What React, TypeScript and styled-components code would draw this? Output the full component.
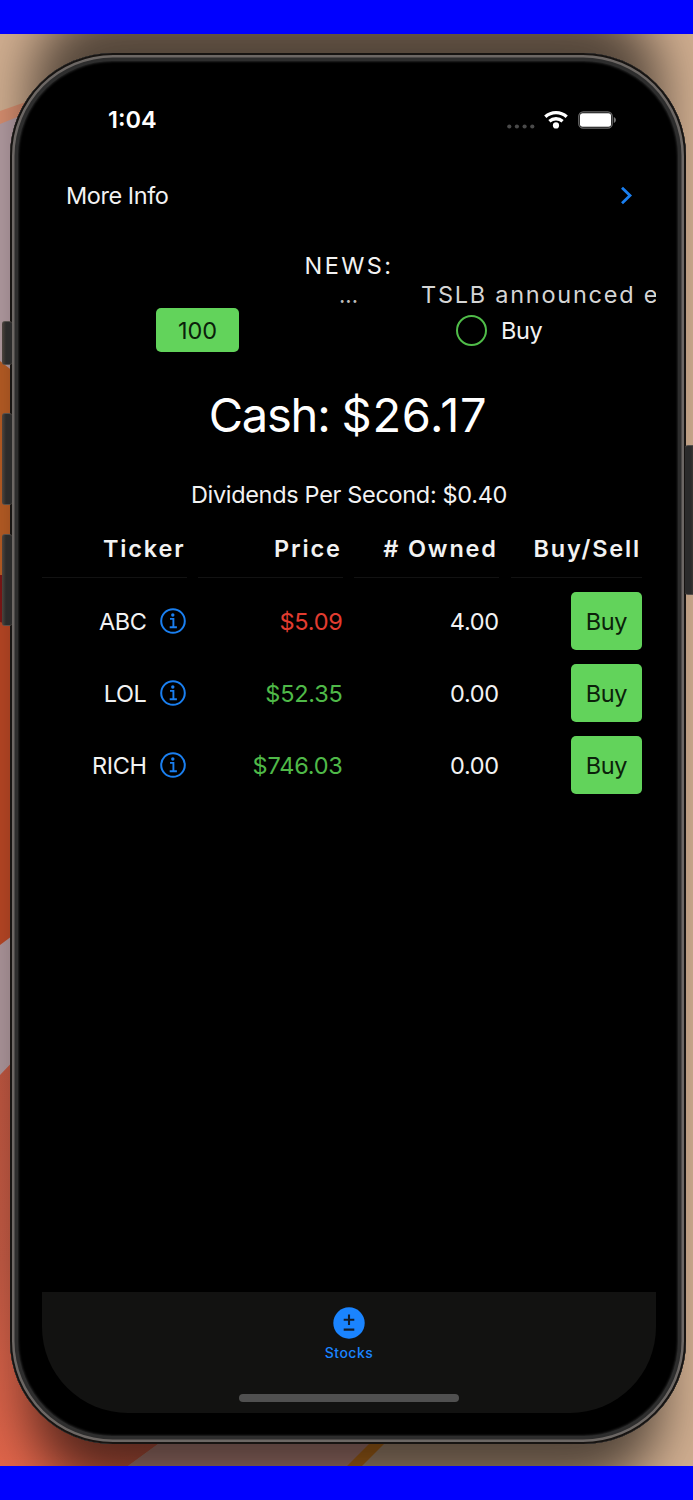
import React from "react";
import styled, { createGlobalStyle } from "styled-components";

const GlobalStyle = createGlobalStyle`
  * { box-sizing: border-box; }
  body {
    margin: 0;
    background: #0000ff;
    font-family: Inter, "Liberation Sans", sans-serif;
    color: #f2f2f2;
  }
`;

const Page = styled.div`
  width: 693px;
  height: 1500px;
  padding: 34px 0;
  background: #0000ff;
  overflow: hidden;
`;

const Desktop = styled.main`
  position: relative;
  height: 1432px;
  padding: 19px 7px 22px 10px;
  overflow: hidden;
`;

const WallpaperSvg = styled.svg`
  position: absolute;
  inset: 0;
`;

const Phone = styled.div`
  position: relative;
  height: 100%;
  padding: 10px 30px 31px 32px;
  border-radius: 103px;
  background: #000;
  box-shadow:
    inset 0 0 0 2px #171412,
    inset 0 0 0 4.5px #6c6764,
    inset 0 0 0 8px #2d2d2d,
    inset 0 0 2px 9px #222;
`;

const SideButton = styled.span<{ $side: "left" | "right"; $top: number; $height: number }>`
  position: absolute;
  ${(p) => p.$side}: ${(p) => (p.$side === "left" ? -8 : -9)}px;
  top: ${(p) => p.$top}px;
  width: 10px;
  height: ${(p) => p.$height}px;
  border-radius: 3px;
  border-top: 1px solid #55504c;
  border-bottom: 1px solid #55504c;
  background: linear-gradient(
    to ${(p) => p.$side},
    #2b2b2b 60%,
    #4d453e
  );
`;

const Screen = styled.div`
  display: flex;
  flex-direction: column;
  height: 100%;
  border-radius: 0 0 86px 86px;
  overflow: hidden;
`;

const StatusBar = styled.header`
  display: flex;
  align-items: center;
  justify-content: space-between;
  height: 113px;
  padding: 0 39px 0 66px;
`;

const StatusIcons = styled.div`
  display: flex;
  align-items: center;
`;

const SignalSlot = styled.div`
  display: flex;
  padding-top: 13px;
`;

const WifiSlot = styled.div`
  display: flex;
  margin: 0 10px 0 9px;
`;

const Text = styled.span<{ $size?: number; $spacing?: number; $weight?: number; $color?: string }>`
  padding-top: 1.5px;
  font-size: ${(p) => p.$size ?? 23.5}px;
  letter-spacing: ${(p) => p.$spacing ?? 0}px;
  font-weight: ${(p) => p.$weight ?? 400};
  color: ${(p) => p.$color ?? "inherit"};
  line-height: 1.2;
  white-space: nowrap;
`;

const MoreInfoRow = styled.div`
  display: flex;
  align-items: center;
  justify-content: space-between;
  height: 38px;
  padding: 0 23px 0 24px;
`;

const News = styled.section`
  display: flex;
  flex-direction: column;
  align-items: center;
  margin-top: 36px;
`;

const NewsTitle = styled.div`
  display: flex;
  align-items: center;
  height: 30px;
`;

const Marquee = styled.div`
  display: flex;
  align-items: center;
  align-self: stretch;
  height: 28px;
  padding-left: 297px;
  gap: 63px;
  overflow: hidden;
`;

const OrderRow = styled.div`
  display: flex;
  align-items: center;
  height: 44px;
  padding-left: 114px;
`;

const Button = styled.button<{ $width: number; $height: number }>`
  display: flex;
  align-items: center;
  justify-content: center;
  width: ${(p) => p.$width}px;
  height: ${(p) => p.$height}px;
  padding: 0;
  border: 0;
  border-radius: 5px;
  background: #62d35b;
  color: #0b210a;
  font-family: inherit;
`;

const Toggle = styled.label`
  display: flex;
  align-items: center;
  gap: 14px;
  margin-left: 217px;
`;

const Radio = styled.span`
  width: 31px;
  height: 31px;
  border: 2px solid #50bd49;
  border-radius: 50%;
`;

const Summary = styled.section<{ $height: number; $gap?: number }>`
  display: flex;
  align-items: center;
  justify-content: center;
  gap: ${(p) => p.$gap ?? 0}px;
  height: ${(p) => p.$height}px;
`;

const CashSummary = styled(Summary)`
  padding: 0 2px 2px 0;
`;

const TableSection = styled.section`
  margin-top: 12px;
`;

const Table = styled.div`
  display: grid;
  grid-template-columns: 144.5px 144.5px 144.5px 131.5px;
  column-gap: 11.7px;
`;

const HeadCell = styled.div`
  display: flex;
  align-items: center;
  justify-content: flex-end;
  height: 56px;
  margin-bottom: 7px;
  padding: 0 1px 2px 0;
  border-bottom: 1.5px solid #121212;
`;

const Cell = styled.div`
  display: flex;
  align-items: center;
  justify-content: flex-end;
  gap: 13px;
  height: 72.2px;
`;

const TickerCell = styled(Cell)`
  padding-right: 1px;
`;

const TabBar = styled.nav`
  display: flex;
  flex-direction: column;
  align-items: center;
  height: 121px;
  margin-top: auto;
  padding: 15px 0 11px;
  background: #121211;
  color: #1a84ff;
`;

const TabItem = styled.div`
  display: flex;
  flex-direction: column;
  align-items: center;
  gap: 4.5px;
`;

const HomeIndicator = styled.span`
  width: 220px;
  height: 8px;
  margin-top: auto;
  border-radius: 4px;
  background: #505050;
`;

function Wallpaper() {
  return (
    <WallpaperSvg width="693" height="1432" viewBox="0 34 693 1432">
      <defs>
        <linearGradient id="coral" gradientUnits="userSpaceOnUse" x1="0" y1="1060" x2="0" y2="1466">
          <stop offset="0" stopColor="#bd5640" />
          <stop offset=".5" stopColor="#c25a44" />
          <stop offset="1" stopColor="#e0654a" />
        </linearGradient>
        <filter id="soft" x="-20%" y="-10%" width="140%" height="120%">
          <feGaussianBlur stdDeviation="26" />
        </filter>
      </defs>
      <rect y="34" width="693" height="1432" fill="#d0ae90" />
      <path d="M0 111 L60 90 V400 H0Z" fill="#d88f70" />
      <path d="M0 124 L60 100 V400 H0Z" fill="#b39ca2" />
      <path d="M0 361 L14 372 V580 H0Z" fill="#b85d25" />
      <path d="M0 575 H20 V640 H0Z" fill="#7c1717" />
      <path d="M0 622 L20 628 V960 H0Z" fill="#b94725" />
      <path d="M0 945 L20 930 V1090 H0Z" fill="#ad969b" />
      <path d="M0 1075 L20 1054 V1300 L180 1428 L128 1466 H0Z" fill="url(#coral)" />
      <path d="M128 1466 L180 1428 H390 L347 1466Z" fill="#d0978c" />
      <path d="M347 1466 L385 1428 H400 L362 1466Z" fill="#d9801f" />
      <rect x="32" y="4" width="629" height="1482" rx="80" fill="#000" opacity=".6" filter="url(#soft)" />
    </WallpaperSvg>
  );
}

function WifiIcon() {
  return (
    <svg width="24" height="19" viewBox="0 0 24 19" fill="none" stroke="#fff" strokeWidth="3.3">
      <path d="M1.3 6.8 C7.4 1.2 16.6 1.2 22.7 6.8" />
      <path d="M5.4 11.2 C9.2 7.9 14.8 7.9 18.6 11.2" />
      <circle cx="12" cy="15.4" r="3.1" fill="#fff" stroke="none" />
    </svg>
  );
}

function BatteryIcon() {
  return (
    <svg width="39" height="18" viewBox="0 0 39 18">
      <rect x=".8" y=".8" width="33.4" height="16.4" rx="4.5" fill="none" stroke="#6b6b6b" strokeWidth="1.3" />
      <rect x="2" y="2.2" width="31" height="13.6" rx="2.5" fill="#fff" />
      <path d="M35.8 6 C38.6 7 38.6 11 35.8 12Z" fill="#777" />
    </svg>
  );
}

function SignalDots() {
  return (
    <svg width="28" height="5" viewBox="0 0 28 5" fill="#4a4a4a">
      <circle cx="2.3" cy="2.5" r="2.1" />
      <circle cx="9.9" cy="2.5" r="2.1" />
      <circle cx="17.6" cy="2.5" r="2.1" />
      <circle cx="25.3" cy="2.5" r="2.1" />
    </svg>
  );
}

function InfoIcon() {
  return (
    <svg width="26" height="26" viewBox="0 0 26 26" fill="none" stroke="#1a7ff0" strokeWidth="2">
      <circle cx="13" cy="13" r="11.8" />
      <circle cx="12.8" cy="7" r="1.7" fill="#1a7ff0" stroke="none" />
      <path d="M10 10.9 H13.4 V19 M9.7 19.2 H16.9" strokeWidth="1.9" />
    </svg>
  );
}

const rows = [
  { ticker: "ABC", price: "$5.09", owned: "4.00", color: "#e23c30" },
  { ticker: "LOL", price: "$52.35", owned: "0.00", color: "#4fb948" },
  { ticker: "RICH", price: "$746.03", owned: "0.00", color: "#4fb948" },
];

export default function App() {
  return (
    <Page>
      <GlobalStyle />
      <Desktop>
        <Wallpaper />
        <Phone>
          <SideButton $side="left" $top={268} $height={44} />
          <SideButton $side="left" $top={360} $height={92} />
          <SideButton $side="left" $top={481} $height={92} />
          <SideButton $side="right" $top={392} $height={150} />
          <Screen>
            <StatusBar>
              <Text $size={23.5} $weight={600} $color="#fff">1:04</Text>
              <StatusIcons>
                <SignalSlot><SignalDots /></SignalSlot>
                <WifiSlot><WifiIcon /></WifiSlot>
                <BatteryIcon />
              </StatusIcons>
            </StatusBar>
            <MoreInfoRow>
              <Text $spacing={-0.45}>More Info</Text>
              <svg width="13" height="19" viewBox="0 0 13 19" fill="none" stroke="#1a7ff0" strokeWidth="2.8">
                <path d="M2 1.8 L10 9.5 L2 17.2" />
              </svg>
            </MoreInfoRow>
            <News>
              <NewsTitle>
                <Text $spacing={2.4}>NEWS:</Text>
              </NewsTitle>
              <Marquee>
                <Text $size={22} $color="#bbb">...</Text>
                <Text $spacing={1.75} $color="#d5d5d5">TSLB announced e</Text>
              </Marquee>
            </News>
            <OrderRow>
              <Button $width={83} $height={44}>
                <Text>100</Text>
              </Button>
              <Toggle>
                <Radio />
                <Text $spacing={-0.4}>Buy</Text>
              </Toggle>
            </OrderRow>
            <CashSummary $height={126} $gap={12}>
              <Text $size={47} $spacing={-1.2} $color="#fff">Cash:</Text>
              <Text $size={47} $spacing={0.7} $color="#fff">$26.17</Text>
            </CashSummary>
            <Summary $height={32}>
              <Text $spacing={-0.33}>Dividends Per Second: $0.40</Text>
            </Summary>
            <TableSection>
              <Table>
                {["Ticker", "Price", "# Owned", "Buy/Sell"].map((label) => (
                  <HeadCell key={label}>
                    <Text $weight={600} $spacing={1.85}>{label}</Text>
                  </HeadCell>
                ))}
                {rows.map((row) => (
                  <React.Fragment key={row.ticker}>
                    <TickerCell>
                      <Text $spacing={-0.4}>{row.ticker}</Text>
                      <InfoIcon />
                    </TickerCell>
                    <Cell>
                      <Text $spacing={-0.2} $color={row.color}>{row.price}</Text>
                    </Cell>
                    <Cell>
                      <Text $spacing={-0.3}>{row.owned}</Text>
                    </Cell>
                    <Cell>
                      <Button $width={71.5} $height={58}>
                        <Text $spacing={-0.4}>Buy</Text>
                      </Button>
                    </Cell>
                  </React.Fragment>
                ))}
              </Table>
            </TableSection>
            <TabBar>
              <TabItem>
                <svg width="32" height="32" viewBox="0 0 32 32">
                  <circle cx="16" cy="16" r="15.7" fill="#1a84ff" />
                  <path d="M16 7.5 V18 M10.7 12.8 H21.3 M10.7 22.6 H21.3" stroke="#121c2c" strokeWidth="2.1" />
                </svg>
                <Text $size={14} $weight={500} $spacing={0.5}>Stocks</Text>
              </TabItem>
              <HomeIndicator />
            </TabBar>
          </Screen>
        </Phone>
      </Desktop>
    </Page>
  );
}
